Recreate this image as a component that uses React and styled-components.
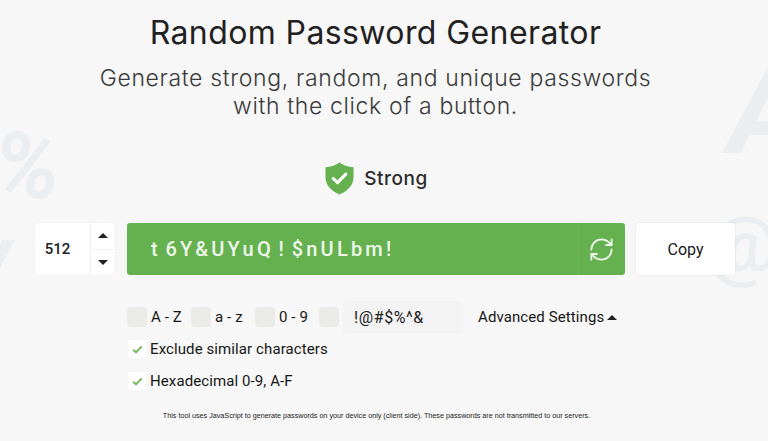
import React from 'react';
import styled, { createGlobalStyle } from 'styled-components';
import { RefreshCw } from 'lucide-react';

const GlobalStyle = createGlobalStyle`
  html, body {
    margin: 0;
    padding: 0;
    background: #f7f7f7;
  }
`;

const Page = styled.div`
  position: relative;
  width: 768px;
  height: 441px;
  overflow: hidden;
  background: #f7f7f7;
  color: #212121;
  font-family: Roboto, "Liberation Sans", sans-serif;
`;

const BackGlyph = styled.span`
  position: absolute;
  left: ${props => props.left}px;
  top: ${props => props.top}px;
  font-family: Roboto, sans-serif;
  font-size: ${props => props.size}px;
  font-weight: ${props => props.weight || 700};
  font-style: ${props => (props.upright ? 'normal' : 'italic')};
  line-height: 1;
  color: #ebeef0;
  user-select: none;
`;

const Content = styled.div`
  position: relative;
  display: flex;
  flex-direction: column;
`;

const Header = styled.header`
  width: 751px;
  padding-top: 14px;
  text-align: center;
`;

const Title = styled.h1`
  margin: 0;
  font-family: Inter, sans-serif;
  font-size: 32px;
  line-height: 38px;
  font-weight: 400;
  letter-spacing: 0.4px;
  color: #212121;
`;

const Subtitle = styled.p`
  margin: 12px 0 0;
  font-family: Inter, sans-serif;
  font-size: 23px;
  line-height: 28px;
  font-weight: 300;
  letter-spacing: 0.65px;
  color: #3a3a3a;
`;

const Strength = styled.div`
  display: flex;
  align-items: center;
  justify-content: center;
  gap: 10px;
  width: 753px;
  margin-top: 41px;
  height: 34px;
`;

const StrengthLabel = styled.span`
  font-family: Inter, sans-serif;
  font-size: 19px;
  font-weight: 500;
  letter-spacing: 0.5px;
  color: #2b2b2b;
`;

const GeneratorRow = styled.div`
  display: flex;
  align-items: stretch;
  height: 52px;
  margin: 28px 0 0 35px;
`;

const LengthBox = styled.div`
  display: flex;
  width: 80px;
  background: #fff;
  border-radius: 4px;
  box-shadow: 0 0 2px rgba(0, 0, 0, 0.05);
`;

const LengthValue = styled.div`
  display: flex;
  align-items: center;
  justify-content: center;
  width: 56px;
  padding-right: 10px;
  box-sizing: border-box;
  font-size: 15px;
  font-weight: 500;
  color: #212121;
  border-right: 1px solid #f0f0f0;
`;

const Spinner = styled.div`
  display: flex;
  flex-direction: column;
  flex: 1;
`;

const SpinButton = styled.div`
  flex: 1;
  display: flex;
  align-items: center;
  justify-content: center;
  & + & {
    border-top: 1px solid #f3f3f3;
  }
`;

const Caret = styled.i`
  display: block;
  width: 0;
  height: 0;
  border-left: ${props => props.size || 5}px solid transparent;
  border-right: ${props => props.size || 5}px solid transparent;
  ${props => (props.down ? 'border-top' : 'border-bottom')}: ${props => props.size || 5}px solid #212121;
`;

const PasswordBar = styled.div`
  display: flex;
  width: 498px;
  margin-left: 12px;
  background: #66b14f;
  border-radius: 3px;
`;

const PasswordText = styled.div`
  flex: 1;
  display: flex;
  align-items: center;
  padding-left: 24px;
  font-size: 20px;
  font-weight: 500;
  letter-spacing: 3.2px;
  word-spacing: -3.5px;
  white-space: pre;
  color: #eef7ea;
`;

const RefreshButton = styled.div`
  display: flex;
  align-items: center;
  justify-content: center;
  width: 47px;
  padding-right: 2px;
  box-sizing: border-box;
  color: #f1f8ee;
  border-left: 1px solid #6dba55;
`;

const CopyButton = styled.div`
  display: flex;
  align-items: center;
  justify-content: center;
  width: 99px;
  margin-left: 11px;
  background: #fff;
  border-radius: 3px;
  box-shadow: 0 0 2px rgba(0, 0, 0, 0.12);
  font-size: 16px;
  color: #181818;
`;

const Options = styled.div`
  display: flex;
  flex-direction: column;
  gap: 10px;
  margin: 31px 0 0 127px;
`;

const OptionRow = styled.div`
  display: flex;
  align-items: center;
  height: 22px;
`;

const Option = styled.div`
  display: flex;
  align-items: center;
  gap: 4px;
  width: ${props => (props.fixed ? '64px' : 'auto')};
  font-size: 15px;
  letter-spacing: 0.1px;
  color: #161616;
`;

const EmptyBox = styled.span`
  display: block;
  width: 20px;
  height: 20px;
  background: #eaeae6;
  border-radius: 4px;
`;

const CheckedBox = styled.span`
  display: flex;
  align-items: center;
  justify-content: center;
  width: 18px;
  height: 18px;
  margin-left: 1px;
  background: #fff;
  border-radius: 2px;
`;

const SymbolsField = styled.div`
  display: flex;
  align-items: center;
  width: 109px;
  height: 32px;
  margin: 0 15px 0 4px;
  padding-left: 11px;
  background: #f3f3f3;
  border-radius: 3px;
  font-size: 16px;
  letter-spacing: 0.6px;
  color: #212121;
`;

const AdvancedToggle = styled.div`
  display: flex;
  align-items: center;
  gap: 3px;
  font-size: 15px;
  letter-spacing: 0.1px;
  color: #161616;
`;

const Footnote = styled.p`
  width: 753px;
  margin: 19px 0 0;
  text-align: center;
  font-family: "Liberation Sans", sans-serif;
  font-size: 7.2px;
  line-height: 10px;
  color: #222;
`;

const ShieldIcon = () => (
  <svg width="29" height="33" viewBox="0 0 30 34">
    <path
      d="M15 0.5 C18.5 3.2 23.5 5 29.5 5.4 L29.5 15.5 C29.5 24 23.5 30 15 33.5 C6.5 30 0.5 24 0.5 15.5 L0.5 5.4 C6.5 5 11.5 3.2 15 0.5 Z"
      fill="#66b14f"
    />
    <path d="M8.5 17 L13 21.3 L21.5 12.5" fill="none" stroke="#fff" strokeWidth="3.2" strokeLinecap="round" strokeLinejoin="round" />
  </svg>
);

const CheckIcon = () => (
  <svg width="11" height="9" viewBox="0 0 11 9">
    <path d="M1.2 4.8 L4 7.4 L9.8 1.4" fill="none" stroke="#76b862" strokeWidth="2" />
  </svg>
);

export default function App() {
  return (
    <Page>
      <GlobalStyle />
      <BackGlyph left={-6} top={121} size={92}>%</BackGlyph>
      <BackGlyph left={-30} top={214} size={84}>y</BackGlyph>
      <BackGlyph left={728} top={52} size={120}>A</BackGlyph>
      <BackGlyph left={708} top={206} size={78} weight={500} upright>@</BackGlyph>
      <Content>
        <Header>
          <Title>Random Password Generator</Title>
          <Subtitle>
            Generate strong, random, and unique passwords
            <br />
            with the click of a button.
          </Subtitle>
        </Header>
        <Strength>
          <ShieldIcon />
          <StrengthLabel>Strong</StrengthLabel>
        </Strength>
        <GeneratorRow>
          <LengthBox>
            <LengthValue>512</LengthValue>
            <Spinner>
              <SpinButton><Caret /></SpinButton>
              <SpinButton><Caret down /></SpinButton>
            </Spinner>
          </LengthBox>
          <PasswordBar>
            <PasswordText>t 6Y&amp;UYuQ ! $nULbm!</PasswordText>
            <RefreshButton><RefreshCw size={27} strokeWidth={1.6} /></RefreshButton>
          </PasswordBar>
          <CopyButton>Copy</CopyButton>
        </GeneratorRow>
        <Options>
          <OptionRow>
            <Option fixed><EmptyBox />A - Z</Option>
            <Option fixed><EmptyBox />a - z</Option>
            <Option fixed><EmptyBox />0 - 9</Option>
            <EmptyBox />
            <SymbolsField>!@#$%^&amp;</SymbolsField>
            <AdvancedToggle>Advanced Settings<Caret size={5} /></AdvancedToggle>
          </OptionRow>
          <OptionRow>
            <Option><CheckedBox><CheckIcon /></CheckedBox>Exclude similar characters</Option>
          </OptionRow>
          <OptionRow>
            <Option><CheckedBox><CheckIcon /></CheckedBox>Hexadecimal 0-9, A-F</Option>
          </OptionRow>
        </Options>
        <Footnote>This tool uses JavaScript to generate passwords on your device only (client side). These passwords are not transmitted to our servers.</Footnote>
      </Content>
    </Page>
  );
}
